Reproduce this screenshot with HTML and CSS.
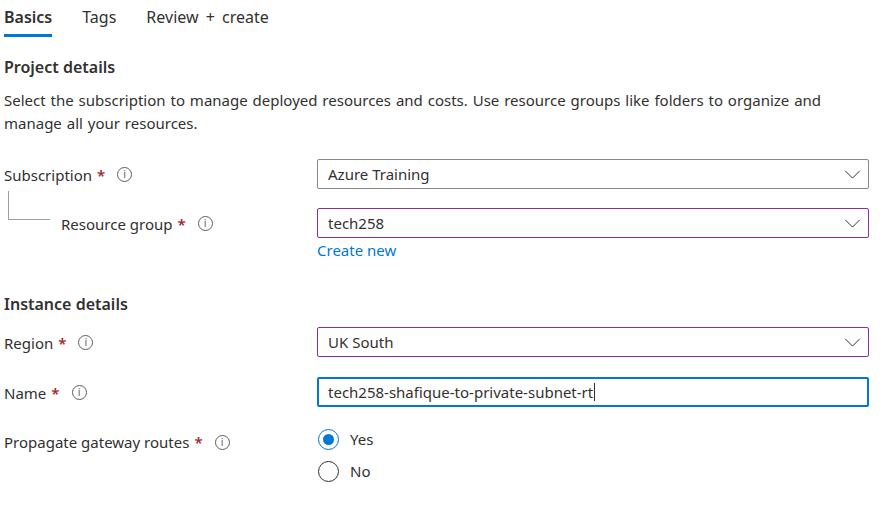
FILE: index.html
```html
<!DOCTYPE html>
<html lang="en">
<head>
<meta charset="utf-8">
<title>Create route table</title>
<link rel="stylesheet" href="styles.css">
</head>
<body>
<div class="page">
  <nav class="tabs">
    <span class="tab active">Basics</span>
    <span class="tab">Tags</span>
    <span class="tab">Review + create</span>
  </nav>

  <h2 class="section-title first">Project details</h2>
  <p class="desc">Select the subscription to manage deployed resources and costs. Use resource groups like folders to organize and manage all your resources.</p>

  <div class="row">
    <div class="label"><span>Subscription</span><span class="req">*</span><span class="info">i</span></div>
    <div class="field">
      <div class="select"><span>Azure Training</span><svg class="chev" viewBox="0 0 18 10" width="17" height="9"><polyline points="1,1 9,9 17,1" fill="none" stroke="#323130" stroke-width="1.1"/></svg></div>
    </div>
  </div>

  <div class="row sub">
    <div class="label nested"><span class="tree"></span><span>Resource group</span><span class="req">*</span><span class="info">i</span></div>
    <div class="field">
      <div class="select purple"><span>tech258</span><svg class="chev" viewBox="0 0 18 10" width="17" height="9"><polyline points="1,1 9,9 17,1" fill="none" stroke="#323130" stroke-width="1.1"/></svg></div>
      <a class="link" href="#">Create new</a>
    </div>
  </div>

  <h2 class="section-title second">Instance details</h2>

  <div class="row">
    <div class="label"><span>Region</span><span class="req">*</span><span class="info">i</span></div>
    <div class="field">
      <div class="select purple"><span>UK South</span><svg class="chev" viewBox="0 0 18 10" width="17" height="9"><polyline points="1,1 9,9 17,1" fill="none" stroke="#323130" stroke-width="1.1"/></svg></div>
    </div>
  </div>

  <div class="row gap">
    <div class="label"><span>Name</span><span class="req">*</span><span class="info">i</span></div>
    <div class="field">
      <div class="input focused"><span>tech258-shafique-to-private-subnet-rt</span><span class="caret"></span></div>
    </div>
  </div>

  <div class="row gap radios-row">
    <div class="label top"><span>Propagate gateway routes</span><span class="req">*</span><span class="info">i</span></div>
    <div class="field radios">
      <div class="radio checked"><span class="dot"></span><span>Yes</span></div>
      <div class="radio"><span class="dot"></span><span>No</span></div>
    </div>
  </div>
</div>
</body>
</html>
```

FILE: styles.css
```css
* { box-sizing: border-box; }
html, body { margin: 0; padding: 0; background: #ffffff; }
body {
  font-family: "Noto Sans", "Open Sans", sans-serif;
  font-size: 15px;
  color: #323130;
}
.page { padding-left: 4px; width: 869px; }

.tabs { display: flex; gap: 30px; height: 37px; }
.tab {
  font-size: 16px;
  line-height: 20px;
  padding-top: 7px;
  padding-bottom: 7px;
  border-bottom: 3px solid transparent;
  color: #323130;
  word-spacing: 3px;
}
.tab.active { border-bottom-color: #0078d4; font-weight: 600; }

.section-title {
  margin: 0;
  font-size: 16px;
  font-weight: 600;
  line-height: 22px;
}
.section-title.first { margin-top: 19px; }
.section-title.second { margin-top: 33px; margin-bottom: 12px; }

.desc { margin: 11px 0 24px; line-height: 23px; word-spacing: 1px; }

.row { display: flex; align-items: flex-start; }
.row.sub { margin-top: 19px; }
.row.gap { margin-top: 20px; }
.label {
  width: 313px;
  display: flex;
  align-items: center;
  height: 30px;
  padding-top: 1px;
  position: relative;
}
.label.nested { padding-left: 57px; }
.label.top { height: 21px; margin-top: 4px; }
.tree {
  position: absolute;
  left: 4px;
  top: -17px;
  width: 42px;
  height: 29px;
  border-left: 1px solid #a19f9d;
  border-bottom: 1px solid #a19f9d;
}
.req { color: #a4262c; margin-left: 5px; font-weight: 600; }
.info {
  margin-left: 12px;
  width: 15px;
  height: 15px;
  border: 1px solid #605e5c;
  border-radius: 50%;
  font-size: 10px;
  line-height: 13px;
  text-align: center;
  color: #605e5c;
  font-family: "DejaVu Sans", sans-serif;
}

.field { flex: 0 0 552px; display: flex; flex-direction: column; }
.select, .input {
  height: 30px;
  border: 1px solid #8a8886;
  border-radius: 2px;
  display: flex;
  align-items: center;
  padding: 0 7px 0 10px;
  justify-content: space-between;
}
.select.purple { border-color: #8a2da5; }
.input.focused {
  border: 2px solid #0078d4;
  padding-left: 9px;
  justify-content: flex-start;
}
.caret { width: 1px; height: 18px; background: #323130; margin-left: 1px; }

.link {
  color: #0078d4;
  text-decoration: none;
  line-height: 20px;
  margin-top: 2px;
  align-self: flex-start;
}

.radios { gap: 8px; }
.radio { display: flex; align-items: center; height: 24px; gap: 11px; padding-left: 1px; }
.dot {
  width: 21px;
  height: 21px;
  border: 1px solid #323130;
  border-radius: 50%;
  position: relative;
}
.radio.checked .dot { border-color: #0078d4; }
.radio.checked .dot::after {
  content: "";
  position: absolute;
  left: 4px; top: 4px;
  width: 11px; height: 11px;
  border-radius: 50%;
  background: #0078d4;
}
```
